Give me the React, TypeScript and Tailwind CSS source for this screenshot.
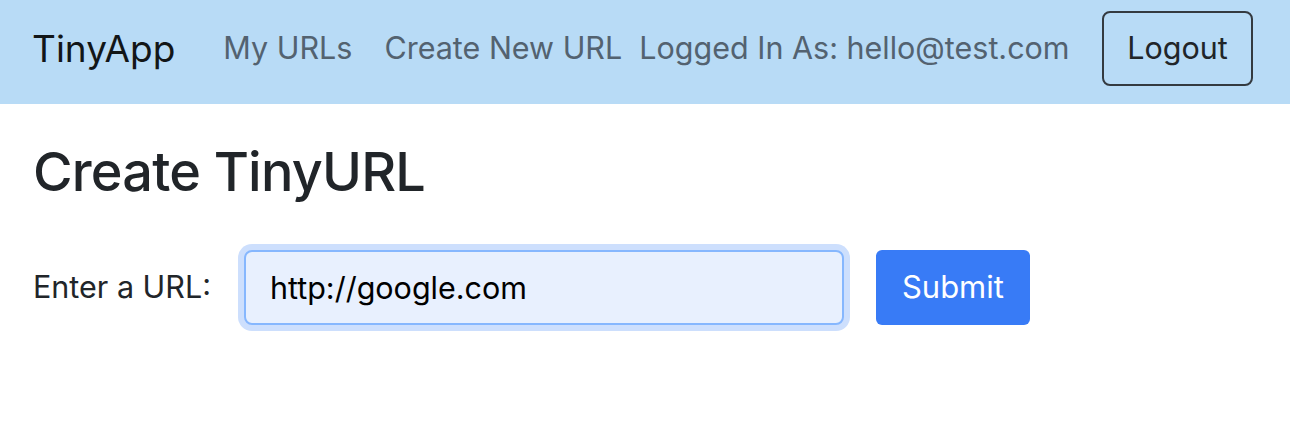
import React from "react";

export default function App() {
  return (
    <div className="min-h-[432px] bg-white font-['Inter','Liberation_Sans',sans-serif]">
      <nav className="flex h-[104px] items-center bg-[#b8dbf6] pb-[8px] pl-[32px] pr-[37px]">
        <span className="text-[37px] leading-none text-[#121618]">TinyApp</span>
        <span className="ml-[48px] text-[30.5px] leading-none text-[#536270]">My URLs</span>
        <span className="ml-[32px] text-[30.5px] leading-none text-[#536270]">Create New URL</span>
        <span className="ml-[17px] text-[30.5px] leading-none text-[#536270]">Logged In As: hello@test.com</span>
        <button className="ml-auto flex h-[75px] w-[151px] items-center justify-center rounded-[8px] border-2 border-[#343a40] text-[30.5px] text-[#212529]">
          Logout
        </button>
      </nav>
      <main className="px-[33px]">
        <h1 className="mt-[34px] text-[54px] font-medium leading-tight tracking-[-0.015em] text-[#212529]">Create TinyURL</h1>
        <form className="mt-[44px] flex items-center" onSubmit={(e) => e.preventDefault()}>
          <label className="text-[30.5px] text-[#212529]">Enter a URL:</label>
          <input
            readOnly
            value="http://google.com"
            className="ml-[33px] h-[75px] w-[600px] rounded-[8px] border-2 border-[#86b7fe] bg-[#e8f0fe] px-[24px] text-[30.5px] text-black shadow-[0_0_0_6px_#cddffd] outline-none"
          />
          <button className="ml-[32px] h-[75px] w-[154px] rounded-[6px] bg-[#387bf6] text-[31px] text-white">
            Submit
          </button>
        </form>
      </main>
    </div>
  );
}
